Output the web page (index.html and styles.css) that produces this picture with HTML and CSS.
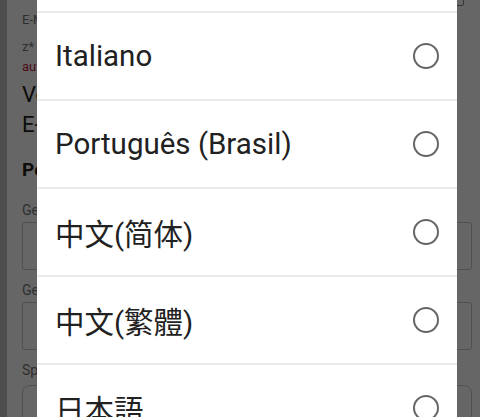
FILE: index.html
```html
<!DOCTYPE html>
<html lang="en">
<head>
    <meta charset="UTF-8">
    <meta name="viewport" content="width=device-width, initial-scale=1.0">
    <title>Language</title>
    <link rel="stylesheet" href="styles.css">
</head>
<body>
    <!-- profile form behind the dialog -->
    <main class="page">
        <div class="top-corner"></div>
        <p class="label">E-Mail</p>
        <p class="label hint">z* Pflichtfeld</p>
        <p class="label warn">auf dem Server</p>
        <p class="line first">Vorname</p>
        <p class="line">E-Mail</p>
        <h3 class="section">Persönlich</h3>
        <p class="label field-label">Geburtsdatum</p>
        <div class="input"></div>
        <p class="label field-label">Geschlecht</p>
        <div class="input"></div>
        <p class="label field-label">Sprache</p>
        <div class="input select"></div>
    </main>

    <div class="scrim"></div>

    <!-- language picker, scrolled part way down -->
    <div class="dialog">
        <ul class="lang-list">
            <li class="lang-row"><span>Italiano</span><i class="radio"></i></li>
            <li class="lang-row"><span>Português (Brasil)</span><i class="radio"></i></li>
            <li class="lang-row"><span lang="zh-CN">中文(简体)</span><i class="radio"></i></li>
            <li class="lang-row"><span lang="zh-TW">中文(繁體)</span><i class="radio"></i></li>
            <li class="lang-row"><span lang="ja">日本語</span><i class="radio"></i></li>
        </ul>
    </div>
</body>
</html>
```

FILE: styles.css
```css
html, body {
    margin: 0;
    height: 100%;
    overflow: hidden;
}
body {
    font-family: Roboto, "Noto Sans CJK SC", sans-serif;
    background: #fff;
}

/* form page under the scrim */
.page {
    border-left: 7px solid #c4c4c4;
    padding: 12px 8px 0 15px;
    height: 100%;
    box-sizing: border-box;
    position: relative;
}
.top-corner {
    position: absolute;
    top: -6px;
    right: 16px;
    width: 10px;
    height: 10px;
    border: 1px solid #888;
    border-radius: 2px;
}
.label {
    margin: 0;
    font-size: 13px;
    line-height: 16px;
    color: #777;
    white-space: nowrap;
}
.hint {
    margin-top: 11px;
}
.warn {
    margin-top: 4px;
    color: #c0243a;
}
.line {
    margin: 0;
    font-size: 22px;
    line-height: 30px;
    color: #222;
}
.line.first {
    margin-top: 5px;
}
.section {
    margin: 18px 0 0;
    font-size: 19px;
    line-height: 24px;
    font-weight: bold;
    color: #222;
}
.field-label {
    margin-top: 12px;
    font-size: 14px;
}
.section + .field-label {
    margin-top: 20px;
}
.input {
    height: 46px;
    margin-top: 4px;
    border: 1px solid #c9c9c9;
    border-radius: 3px;
}
.input.select {
    margin-top: 7px;
    border-radius: 8px;
}

.scrim {
    position: fixed;
    inset: 0;
    background: rgba(0, 0, 0, 0.6);
}

/* dialog */
.dialog {
    position: fixed;
    top: 0;
    left: 37px;
    width: 420px;
    padding-top: 11px;
    background: #fff;
}
.lang-list {
    list-style: none;
    margin: 0;
    padding: 0;
}
.lang-row {
    height: 88px;
    box-sizing: border-box;
    border-top: 2px solid #ebebeb;
    padding: 0 18px;
    display: flex;
    align-items: center;
    justify-content: space-between;
    font-size: 29.5px;
    color: #212121;
}
.lang-row span[lang="zh-TW"] {
    font-family: Roboto, "Noto Sans CJK TC", sans-serif;
}
.lang-row span[lang="ja"] {
    font-family: Roboto, "Noto Sans CJK JP", sans-serif;
}
.radio {
    width: 22px;
    height: 22px;
    border: 2.5px solid #666;
    border-radius: 50%;
    flex-shrink: 0;
}
```
